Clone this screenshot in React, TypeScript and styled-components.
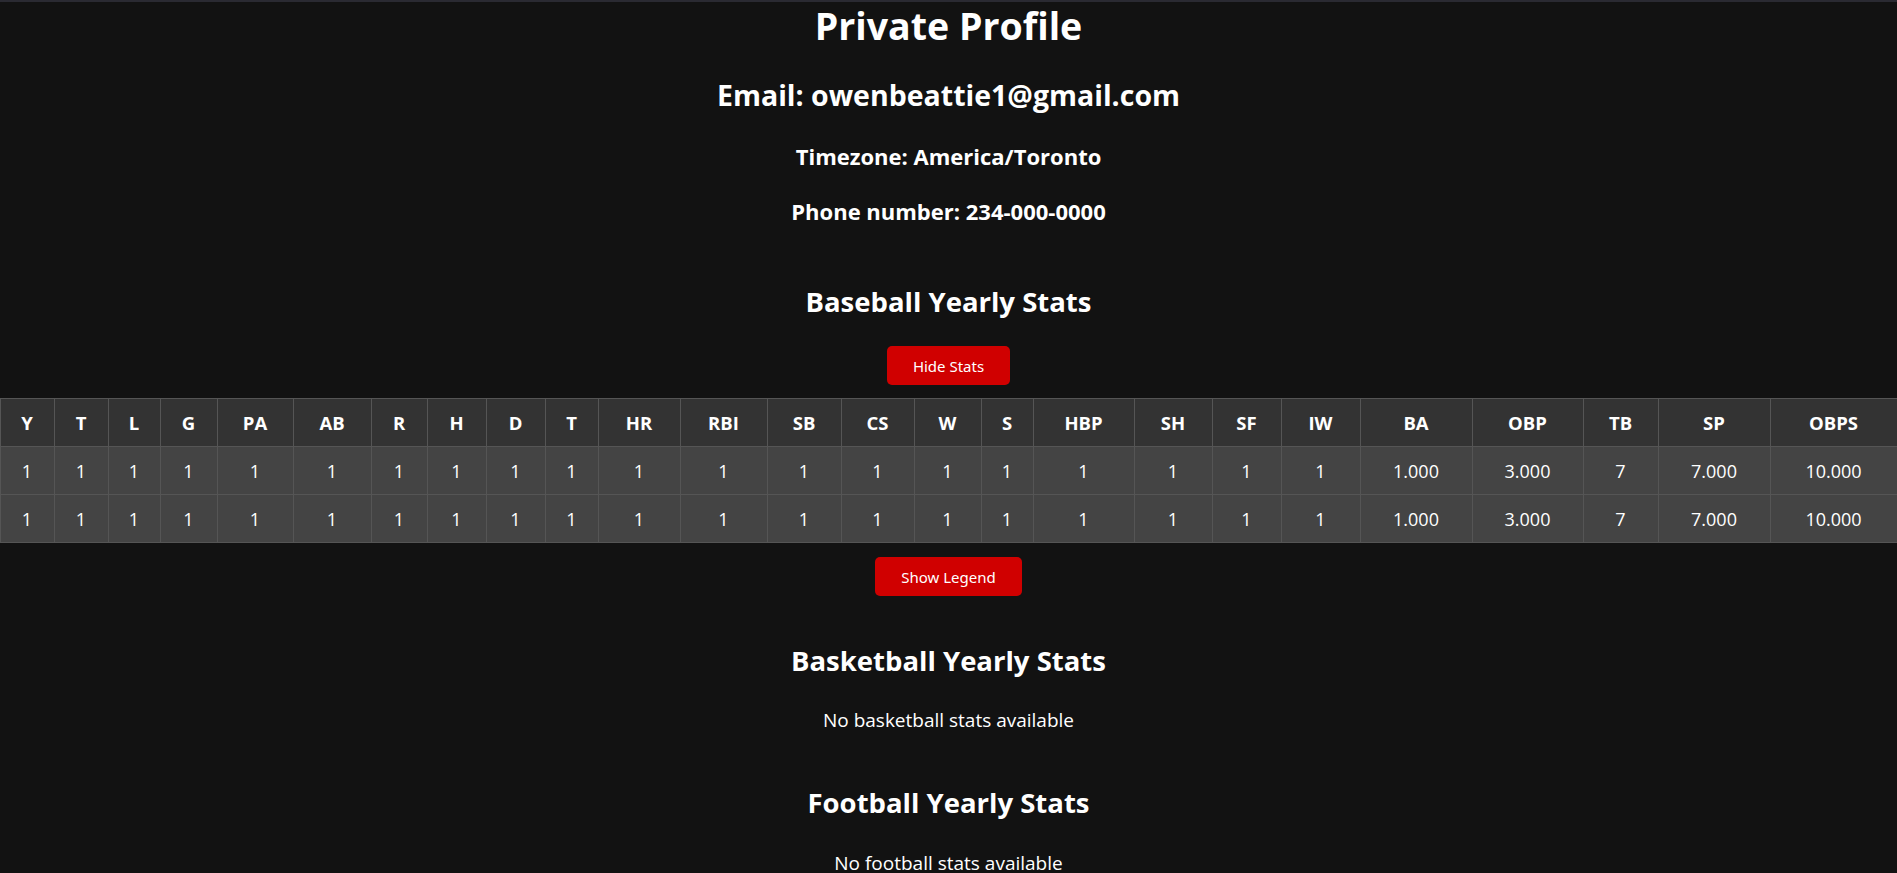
import React from "react";
import styled, { createGlobalStyle } from "styled-components";

const GlobalStyle = createGlobalStyle`
  body {
    margin: 0;
    background: #121212;
    color: #ffffff;
    font-family: "Open Sans", "Noto Sans", sans-serif;
  }
`;

// thin strip across the very top of the window
const TopBar = styled.div`
  position: absolute;
  top: 0;
  left: 0;
  right: 0;
  height: 2px;
  background: #2a2a32;
`;

const Page = styled.div`
  display: flex;
  flex-direction: column;
  align-items: center;
  text-align: center;
`;

const Title = styled.h1`
  margin: 0;
  font-size: 37.5px;
  line-height: 51px;
  font-weight: 700;
`;

const Heading = styled.h2<{ $top: number; $size?: number }>`
  margin: ${(p) => p.$top}px 0 0 0;
  font-size: ${(p) => p.$size ?? 27.5}px;
  line-height: 40px;
  font-weight: 700;
`;

const SubHeading = styled.h3<{ $top: number }>`
  margin: ${(p) => p.$top}px 0 0 0;
  font-size: 22px;
  line-height: 30px;
  font-weight: 700;
`;

const Note = styled.p<{ $top: number }>`
  margin: ${(p) => p.$top}px 0 0 0;
  font-size: 19px;
  line-height: 28px;
`;

const RedButton = styled.button<{ $top: number }>`
  margin-top: ${(p) => p.$top}px;
  height: 39px;
  padding: 0 26px;
  border: none;
  border-radius: 5px;
  background: #d00000;
  color: #ffffff;
  font-family: "Noto Sans", sans-serif;
  font-size: 15px;
  cursor: pointer;
`;

const StatsTable = styled.table`
  margin-top: 13px;
  width: 100%;
  table-layout: fixed;
  border-collapse: collapse;
  border: 1px solid #555555;
`;

const HeadCell = styled.th`
  height: 47px;
  padding: 0;
  background: #333333;
  border: 1px solid #555555;
  font-size: 18.5px;
  font-weight: 700;
`;

const Cell = styled.td`
  height: 47px;
  padding: 0;
  background: #444444;
  border: 1px solid #555555;
  font-size: 18px;
`;

const columns: [string, number][] = [
  ["Y", 54], ["T", 54], ["L", 52], ["G", 57], ["PA", 76], ["AB", 78],
  ["R", 56], ["H", 59], ["D", 59], ["T", 53], ["HR", 82], ["RBI", 87],
  ["SB", 74], ["CS", 73], ["W", 67], ["S", 52], ["HBP", 101], ["SH", 78],
  ["SF", 69], ["IW", 79], ["BA", 112], ["OBP", 111], ["TB", 75], ["SP", 112],
  ["OBPS", 127],
];

const rows = [
  ["1", "1", "1", "1", "1", "1", "1", "1", "1", "1", "1", "1", "1", "1", "1", "1", "1", "1", "1", "1", "1.000", "3.000", "7", "7.000", "10.000"],
  ["1", "1", "1", "1", "1", "1", "1", "1", "1", "1", "1", "1", "1", "1", "1", "1", "1", "1", "1", "1", "1.000", "3.000", "7", "7.000", "10.000"],
];

export default function App() {
  return (
    <>
      <GlobalStyle />
      <TopBar />
      <Page>
        <Title>Private Profile</Title>
        <Heading $top={24} $size={28.5}>Email: owenbeattie1@gmail.com</Heading>
        <SubHeading $top={26}>Timezone: America/Toronto</SubHeading>
        <SubHeading $top={25}>Phone number: 234-000-0000</SubHeading>

        <Heading $top={56}>Baseball Yearly Stats</Heading>
        <RedButton $top={24}>Hide Stats</RedButton>
        <StatsTable>
          <colgroup>
            {columns.map(([name, w], i) => (
              <col key={name + i} style={{ width: w }} />
            ))}
          </colgroup>
          <thead>
            <tr>
              {columns.map(([name], i) => (
                <HeadCell key={name + i}>{name}</HeadCell>
              ))}
            </tr>
          </thead>
          <tbody>
            {rows.map((row, r) => (
              <tr key={r}>
                {row.map((v, i) => (
                  <Cell key={i}>{v}</Cell>
                ))}
              </tr>
            ))}
          </tbody>
        </StatsTable>
        <RedButton $top={14}>Show Legend</RedButton>

        <Heading $top={45}>Basketball Yearly Stats</Heading>
        <Note $top={25}>No basketball stats available</Note>

        <Heading $top={49}>Football Yearly Stats</Heading>
        <Note $top={26}>No football stats available</Note>
      </Page>
    </>
  );
}
